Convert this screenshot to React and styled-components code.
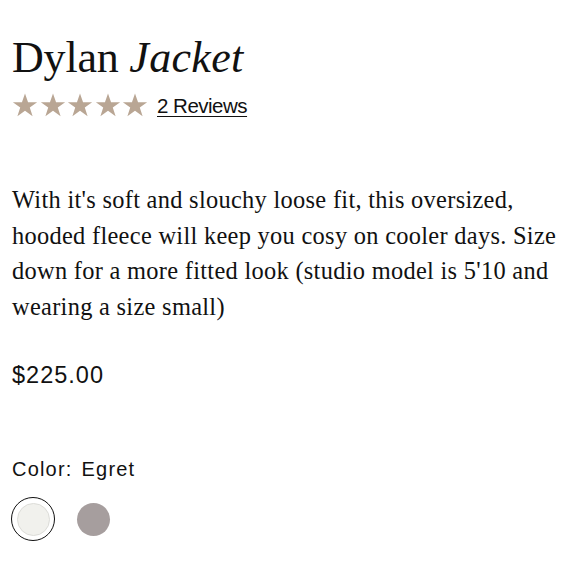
import React from 'react'
import styled, { createGlobalStyle } from 'styled-components'

const GlobalStyle = createGlobalStyle`
  html, body { margin: 0; padding: 0; background: #fff; }
  body { width: 580px; height: 580px; overflow: hidden; }
`

const Page = styled.div`
  box-sizing: border-box;
  width: 580px;
  height: 580px;
  padding: 33px 12px 0 12px;
  color: #111;
`

const Title = styled.h1`
  margin: 0;
  font-family: "Liberation Serif", "Times New Roman", serif;
  font-weight: 400;
  font-size: 44px;
  line-height: 50px;
  letter-spacing: -0.2px;
  em {
    font-style: italic;
    font-family: "Liberation Serif", serif;
    letter-spacing: 0.3px;
  }
`

const RatingRow = styled.div`
  display: flex;
  align-items: center;
  margin-top: 10px;
  gap: 9px;
`

const Stars = styled.div`
  display: flex;
  gap: 1.5px;
`

const ReviewsLink = styled.a`
  font-family: "Liberation Sans", Arial, sans-serif;
  font-size: 20.5px;
  color: #111;
  text-decoration: underline;
  text-underline-offset: 3px;
  text-decoration-thickness: 1px;
  letter-spacing: -0.5px;
`

const Description = styled.p`
  margin: 64px 0 0 0;
  width: 556px;
  font-family: "Liberation Serif", "Times New Roman", serif;
  font-size: 24.4px;
  line-height: 35.6px;
  letter-spacing: 0.3px;
`

const Price = styled.div`
  margin-top: 38px;
  font-family: "Liberation Sans", Arial, sans-serif;
  font-size: 23.5px;
  letter-spacing: 1px;
`

const ColorLabel = styled.div`
  margin-top: 69px;
  font-family: "Liberation Sans", Arial, sans-serif;
  font-size: 20px;
  letter-spacing: 1.2px;
  span { margin-left: 9px; }
`

const Swatches = styled.div`
  display: flex;
  align-items: center;
  gap: 16px;
  margin-top: 16px;
  margin-left: -1px;
`

const Swatch = styled.button`
  box-sizing: border-box;
  width: 44px;
  height: 44px;
  border-radius: 50%;
  padding: 0;
  background: #fff;
  border: ${p => (p.$selected ? '1.5px solid #111' : 'none')};
  display: flex;
  align-items: center;
  justify-content: center;
  cursor: pointer;
`

const Dot = styled.span`
  box-sizing: border-box;
  width: 33px;
  height: 33px;
  border-radius: 50%;
  background: ${p => p.$color};
  border: ${p => (p.$light ? '1px solid #dcdcd8' : 'none')};
`

function Star() {
  return (
    <svg width="26" height="25" viewBox="0 0 24 23">
      <path
        d="M12 0.5l2.82 7.9h8.38l-6.78 4.94 2.6 8.06L12 16.46 4.98 21.4l2.6-8.06L0.8 8.4h8.38z"
        fill="#b9a694"
      />
    </svg>
  )
}

export default function App() {
  return (
    <Page>
      <GlobalStyle />
      <Title>
        Dylan <em>Jacket</em>
      </Title>
      <RatingRow>
        <Stars>
          {[0, 1, 2, 3, 4].map(i => <Star key={i} />)}
        </Stars>
        <ReviewsLink href="#">2 Reviews</ReviewsLink>
      </RatingRow>
      <Description>
        With it's soft and slouchy loose fit, this oversized, hooded fleece will keep you cosy on
        cooler days. Size down for a more fitted look (studio model is 5'10 and wearing a size
        small)
      </Description>
      <Price>$225.00</Price>
      <ColorLabel>
        Color:<span>Egret</span>
      </ColorLabel>
      <Swatches>
        <Swatch $selected>
          <Dot $color="#f1f1ed" $light />
        </Swatch>
        <Swatch>
          <Dot $color="#a69e9e" />
        </Swatch>
      </Swatches>
    </Page>
  )
}
